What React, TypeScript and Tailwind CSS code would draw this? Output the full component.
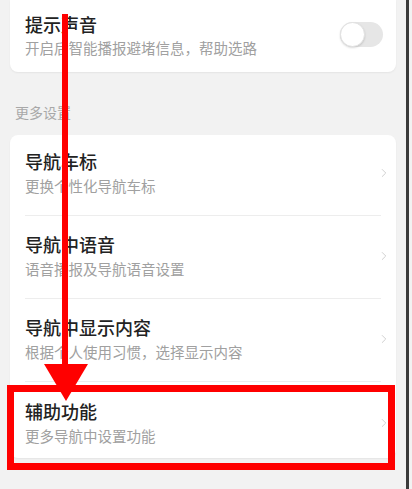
import { ChevronRight } from 'lucide-react'

const FONT = 'font-["Noto_Sans_CJK_SC","Noto_Sans",sans-serif]'

type RowProps = {
  title: string
  desc: string
  last?: boolean
  className?: string
}

function SettingRow({ title, desc, last, className }: RowProps) {
  return (
    <div className={`flex items-center ${last ? '' : 'border-b border-[#ededed]'} ${className ?? ''}`}>
      <div className="flex-1">
        <div className="text-[18px] leading-[24px] font-medium text-[#222]">{title}</div>
        <div className="mt-[3px] text-[14.5px] leading-[20px] text-[#a0a0a0]">{desc}</div>
      </div>
      <ChevronRight size={14} strokeWidth={1.5} className="mr-[-10px] text-[#c9c9c9]" />
    </div>
  )
}

export default function App() {
  return (
    <div className={`relative h-[489px] w-[412px] overflow-hidden bg-[#f2f2f2] ${FONT}`}>
      <div className="flex h-full pr-[3px]">
        <div className="flex-1 px-[10px]">
          {/* sound card, top is scrolled off */}
          <div className="flex h-[72px] items-center rounded-b-lg bg-white px-[15px] pb-[2px] shadow-[0_1px_2px_rgba(0,0,0,0.06)]">
            <div className="flex-1">
              <div className="text-[18px] leading-[24px] font-medium text-[#222]">提示声音</div>
              <div className="mt-[2px] text-[14.5px] leading-[20px] text-[#a0a0a0]">开启后智能播报避堵信息，帮助选路</div>
            </div>
            <div className="relative mr-[-2px] mt-[-2px] h-[25px] w-[43px] rounded-full bg-[#e6e6e6]">
              <div className="absolute left-0 top-0 h-[25px] w-[25px] rounded-full border border-[#e2e2e2] bg-white shadow-[0_1px_2px_rgba(0,0,0,0.15)]" />
            </div>
          </div>

          <div className="ml-[5px] mt-[30px] text-[14px] leading-[20px] text-[#a8a8a8]">更多设置</div>

          <div className="mt-[13px] rounded-lg bg-white shadow-[0_1px_2px_rgba(0,0,0,0.06)]">
            <div className="px-[15px]">
              <SettingRow className="h-[81px] pb-[5px]" title="导航车标" desc="更换个性化导航车标" />
              <SettingRow className="h-[83px] pb-[3px]" title="导航中语音" desc="语音播报及导航语音设置" />
              <SettingRow className="h-[83px] pb-[3px]" title="导航中显示内容" desc="根据个人使用习惯，选择显示内容" />
              <SettingRow className="h-[76px] pt-[5px]" title="辅助功能" desc="更多导航中设置功能" last />
            </div>
          </div>
        </div>
        {/* window edge */}
        <div className="w-[3px] bg-[#3a3a3a]" />
      </div>

      {/* annotation: arrow */}
      <div className="absolute left-[62px] top-[14px] h-[352px] w-[6px] bg-[#ff0000]" />
      <svg className="absolute left-[44px] top-[364px]" width="44" height="37" viewBox="0 0 44 37">
        <polygon points="0,0 44,0 22,37" fill="#ff0000" />
      </svg>

      {/* annotation: highlight box */}
      <div className="absolute left-[7px] top-[385px] h-[85px] w-[388px] border-[7px] border-[#ff0000]" />
    </div>
  )
}
